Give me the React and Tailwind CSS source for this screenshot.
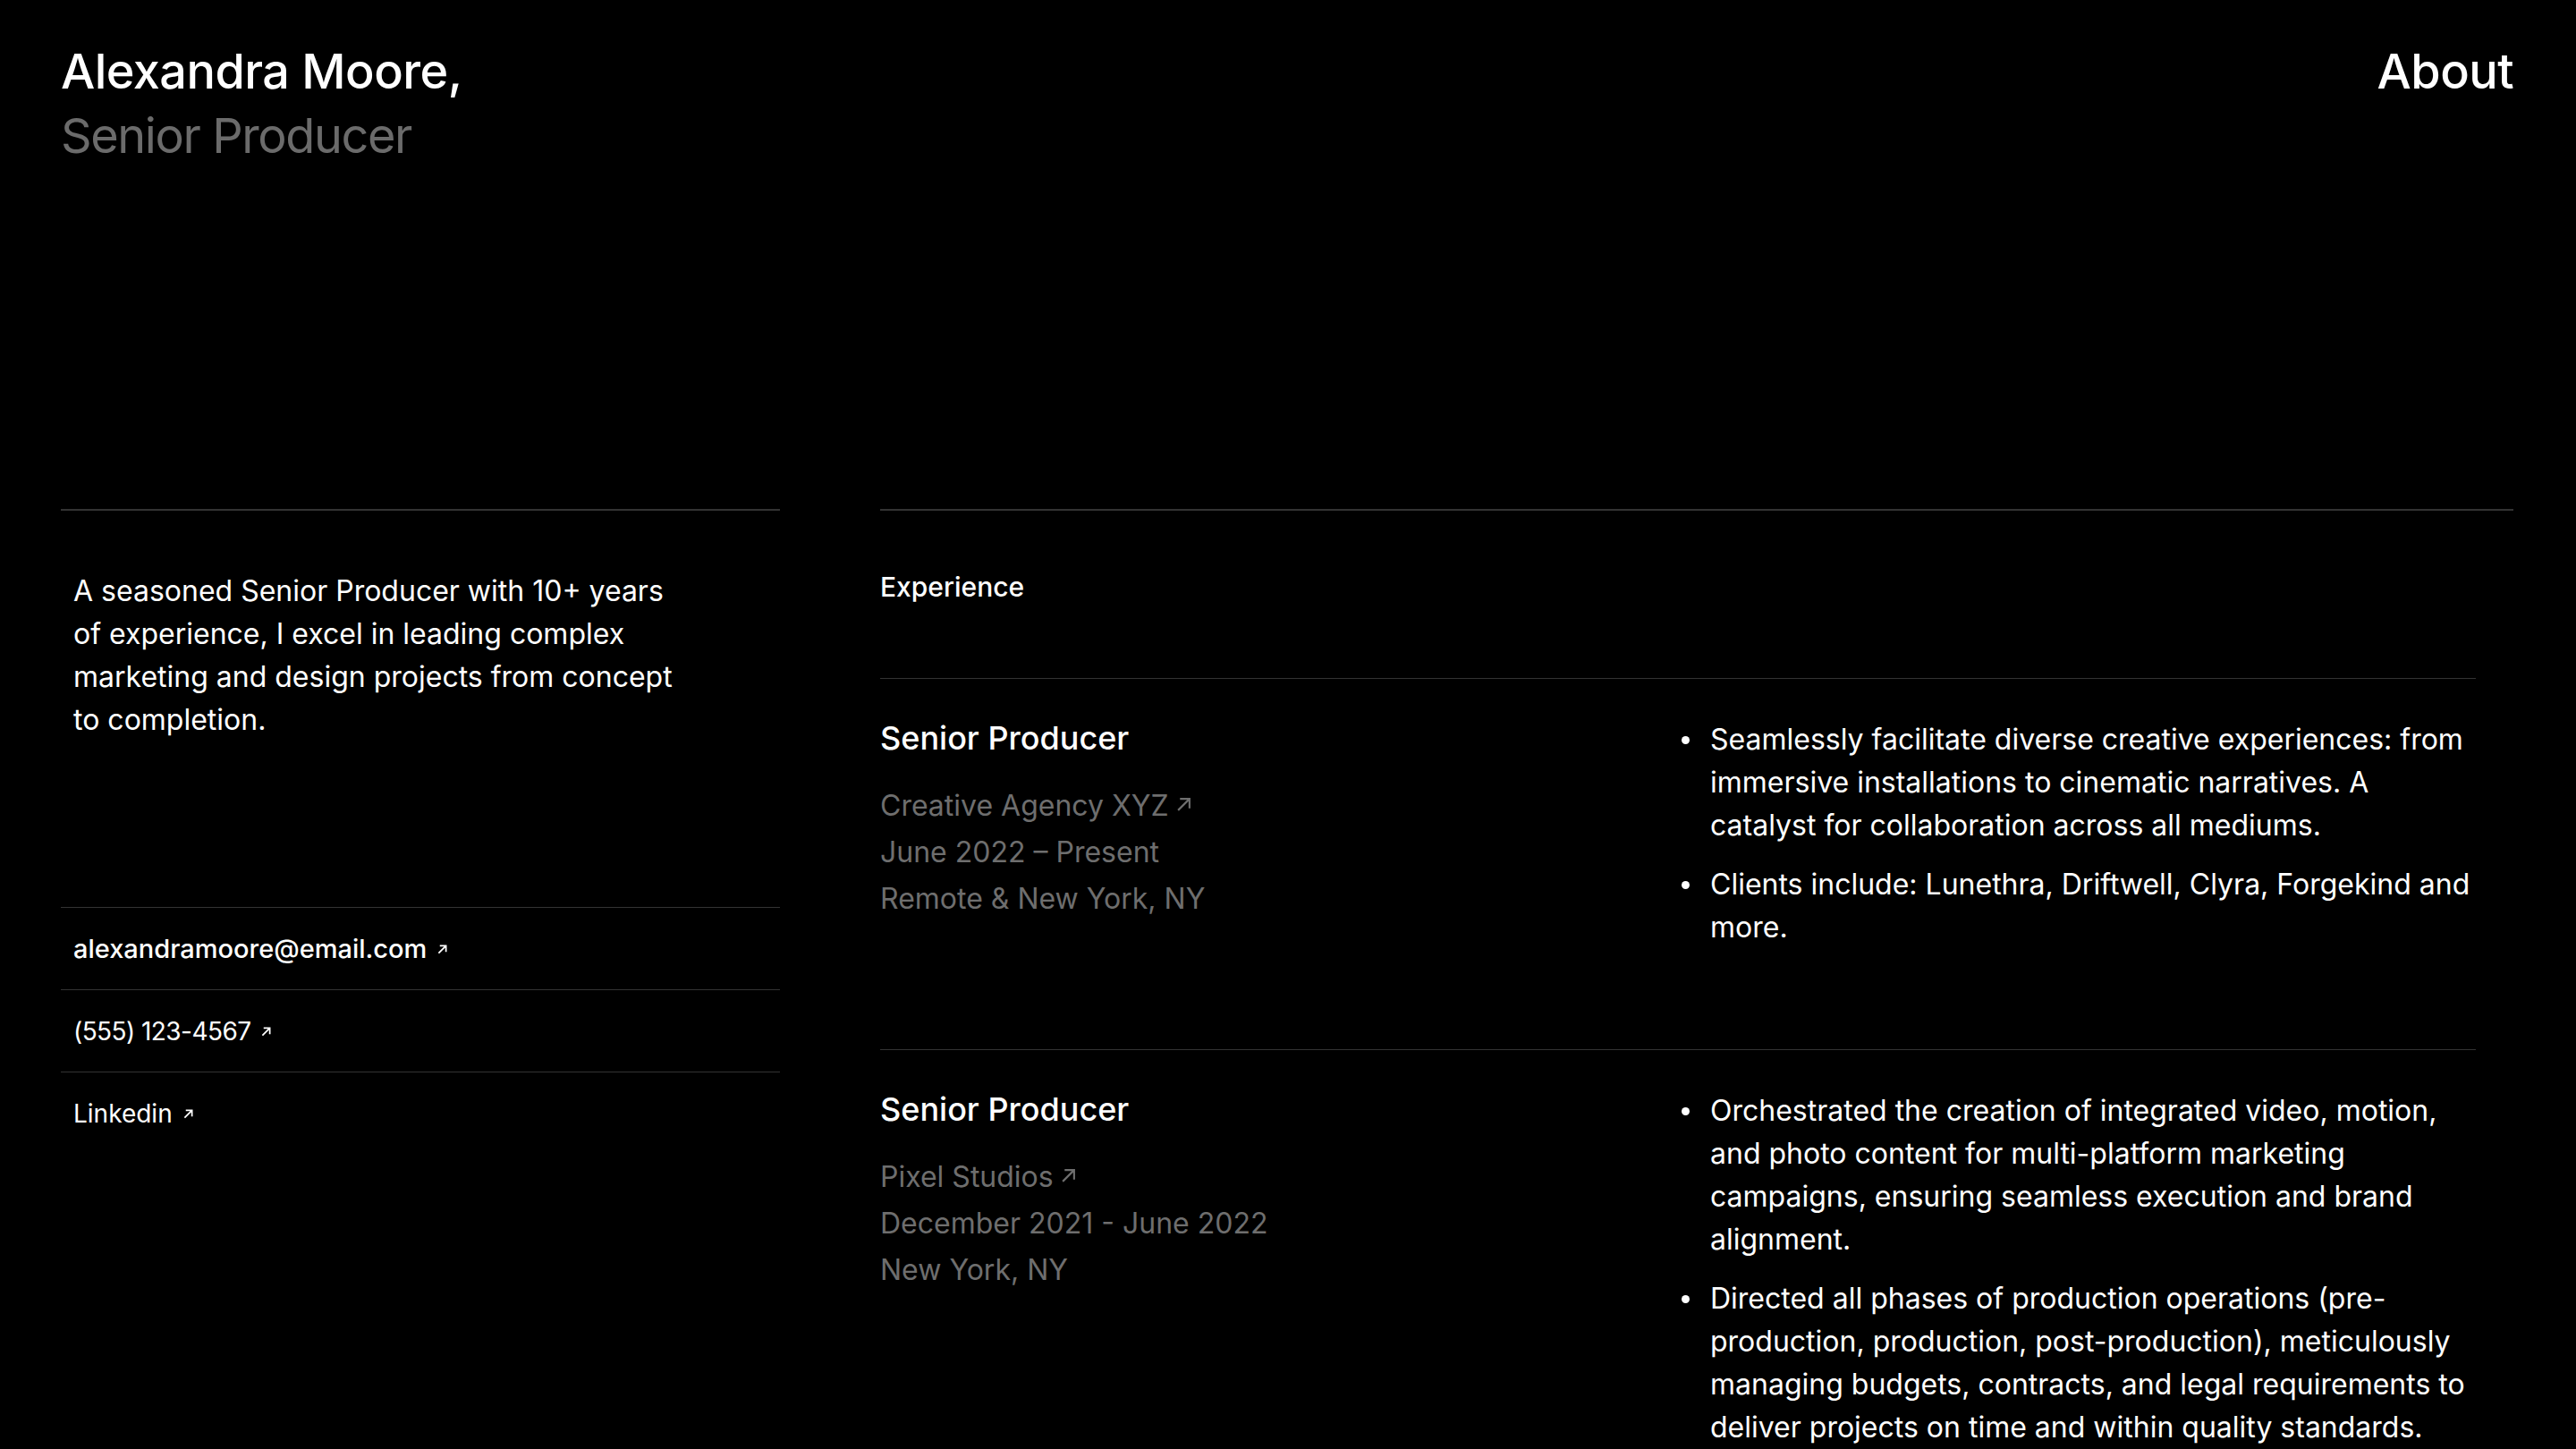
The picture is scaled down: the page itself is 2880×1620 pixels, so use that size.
import React from "react";

const jobs = [
  {
    title: "Senior Producer",
    company: "Creative Agency XYZ",
    dates: "June 2022 – Present",
    place: "Remote & New York, NY",
    points: [
      "Seamlessly facilitate diverse creative experiences: from immersive installations to cinematic narratives. A catalyst for collaboration across all mediums.",
      "Clients include: Lunethra, Driftwell, Clyra, Forgekind and more.",
    ],
  },
  {
    title: "Senior Producer",
    company: "Pixel Studios",
    dates: "December 2021 - June 2022",
    place: "New York, NY",
    points: [
      "Orchestrated the creation of integrated video, motion, and photo content for multi-platform marketing campaigns, ensuring seamless execution and brand alignment.",
      "Directed all phases of production operations (pre-production, production, post-production), meticulously managing budgets, contracts, and legal requirements to deliver projects on time and within quality standards.",
    ],
  },
];

const contacts = [
  { label: "alexandramoore@email.com", cls: "text-[29px] font-medium" },
  { label: "(555) 123-4567", cls: "text-[28px] tracking-[-0.02em]" },
  { label: "Linkedin", cls: "text-[28px]" },
];

const Arrow = ({ className, weight = 1.6 }) => (
  <svg viewBox="0 0 12 12" fill="none" className={className}>
    <path d="M1.5 10.5 10.5 1.5M3 1.5h7.5V9" stroke="currentColor" strokeWidth={weight} />
  </svg>
);

const Job = ({ job }) => (
  <article className="grid grid-cols-[896px_1fr] border-t border-[#333] pt-[44px] pb-[112px]">
    <div>
      <h3 className="text-[36px] leading-[44px] font-medium">{job.title}</h3>
      <div className="mt-[28px] text-[32px] leading-[52px] text-[#6e6e6e]">
        <a href="#" className="flex items-center gap-[8px]">
          {job.company}
          <Arrow className="w-[17px] h-[17px] mb-[3px]" weight={1.5} />
        </a>
        <p>{job.dates}</p>
        <p>{job.place}</p>
      </div>
    </div>
    <ul className="flex flex-col gap-[18px] text-[32px] leading-[48px]">
      {job.points.map((pt, i) => (
        <li key={i} className="flex">
          <span className="mt-[20px] mr-[23px] h-[9px] w-[9px] shrink-0 rounded-full bg-white" />
          <span>{pt}</span>
        </li>
      ))}
    </ul>
  </article>
);

export default function App() {
  return (
    <div className="min-h-screen bg-black text-white pl-[68px] pr-[70px] font-['Inter',sans-serif]">
      <header className="flex justify-between items-start pt-[44px]">
        <h1 className="text-[54px] leading-[72px] font-medium tracking-[-0.01em]">
          Alexandra Moore,
          <br />
          <span className="font-normal tracking-[-0.026em] text-[#6b6b6b]">Senior Producer</span>
        </h1>
        <a href="#" className="text-[54px] leading-[72px] font-medium tracking-[-0.01em]">
          About
        </a>
      </header>

      <main className="mt-[381px] grid grid-cols-[804px_1fr] gap-x-[112px]">
        <aside className="border-t-2 border-[#333]">
          <p className="pt-[66px] pb-[185px] px-[14px] max-w-[720px] text-[32px] leading-[48px]">
            A seasoned Senior Producer with 10+ years of experience, I excel in leading complex
            marketing and design projects from concept to completion.
          </p>
          <ul>
            {contacts.map((c) => (
              <li
                key={c.label}
                className="flex h-[92px] items-center border-t border-[#333] px-[14px]"
              >
                <a href="#" className={`flex items-center gap-[12px] ${c.cls}`}>
                  {c.label}
                  <Arrow className="w-[11px] h-[11px] mt-[2px]" weight={1.9} />
                </a>
              </li>
            ))}
          </ul>
        </aside>

        <section className="border-t-2 border-[#333]">
          <h2 className="pt-[65px] pb-[82px] text-[30px] leading-[40px] font-medium">Experience</h2>
          <div className="pr-[42px]">
            {jobs.map((job, i) => (
              <Job key={i} job={job} />
            ))}
          </div>
        </section>
      </main>
    </div>
  );
}
